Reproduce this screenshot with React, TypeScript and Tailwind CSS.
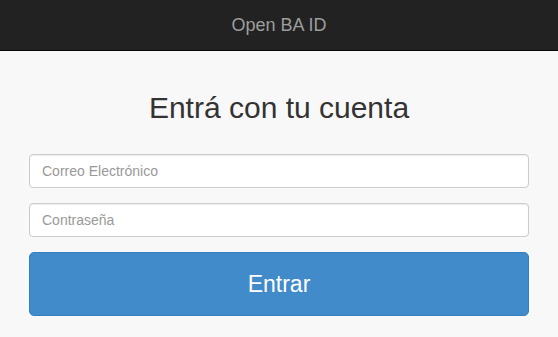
export default function App() {
  return (
    <div className="min-h-screen bg-[#f8f8f8] font-['Liberation_Sans',Arial,sans-serif]">
      {/* Navbar */}
      <header className="h-[51px] bg-[#222222] border-b border-[#080808] flex items-center justify-center">
        <span className="text-[18px] text-[#9d9d9d]">Open BA ID</span>
      </header>

      {/* Login form */}
      <main className="px-[29px] pt-[40px]">
        <h2 className="text-center text-[30px] leading-[33px] text-[#333333] font-normal">Entrá con tu cuenta</h2>
        <form className="mt-[30px] flex flex-col gap-[15px]" onSubmit={(e) => e.preventDefault()}>
          <input
            type="email"
            placeholder="Correo Electrónico"
            className="h-[34px] w-full rounded border border-[#cccccc] bg-white px-3 text-[14px] text-[#555555] placeholder:text-[#999999] outline-none shadow-[inset_0_1px_1px_rgba(0,0,0,0.075)]"
          />
          <input
            type="password"
            placeholder="Contraseña"
            className="h-[34px] w-full rounded border border-[#cccccc] bg-white px-3 text-[14px] text-[#555555] placeholder:text-[#999999] outline-none shadow-[inset_0_1px_1px_rgba(0,0,0,0.075)]"
          />
          <button
            type="submit"
            className="h-[64px] w-full rounded-[5px] border border-[#357ebd] bg-[#428bca] text-[23px] text-white"
          >
            Entrar
          </button>
        </form>
      </main>
    </div>
  )
}
